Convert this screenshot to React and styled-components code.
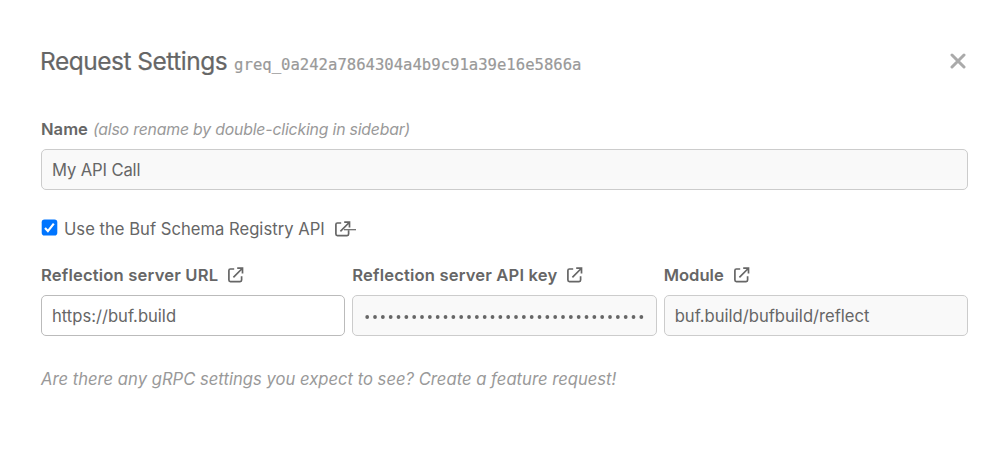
import React from "react";
import styled, { createGlobalStyle } from "styled-components";

const GlobalStyle = createGlobalStyle`
  *, *::before, *::after { box-sizing: border-box; }
  body {
    margin: 0;
    background: #fff;
    color: #666;
    font-family: Inter, "Liberation Sans", sans-serif;
    font-size: 16.6px;
  }
`;

const Dialog = styled.main`
  display: flex;
  flex-direction: column;
  height: 460px;
  padding: 41px 39px 0 41px;
`;

const Header = styled.header`
  display: flex;
  align-items: center;
  justify-content: space-between;
  height: 40px;
`;

const Heading = styled.div`
  display: flex;
  align-items: baseline;
  gap: 7px;
  margin-left: -1px;
  white-space: nowrap;
`;

const Title = styled.h1`
  margin: 0;
  font-size: 24.5px;
  font-weight: 400;
  line-height: 40px;
  letter-spacing: -0.5px;
  -webkit-text-stroke: 0.2px #666;
`;

const RequestId = styled.code`
  color: #999;
  font-family: "DejaVu Sans Mono", monospace;
  font-size: 15.6px;
  -webkit-text-stroke: 0.2px #999;
`;

const CloseButton = styled.button`
  display: flex;
  margin-right: 2px;
  padding: 0;
  border: 0;
  background: none;
`;

const Field = styled.div`
  display: flex;
  flex-direction: column;
  flex: ${(p) => p.$grow ? "1 1 0" : "none"};
  min-width: 0;
  margin-top: ${(p) => p.$top || 0}px;
`;

const Label = styled.label`
  display: flex;
  align-items: center;
  height: 34px;
  padding-bottom: 6px;
  font-size: 16.6px;
  font-weight: 600;
  letter-spacing: ${(p) => p.$tracking || 0}px;
  white-space: nowrap;
`;

const Hint = styled.span`
  margin-left: 5px;
  color: #999;
  font-size: 15.8px;
  font-style: italic;
  font-weight: 400;
  letter-spacing: -0.18px;
`;

const TextInput = styled.input`
  width: 100%;
  height: 41px;
  padding: 0 10px;
  border: 1px solid ${(p) => p.$active ? "#bbb" : "#ccc"};
  border-radius: 5px;
  outline: 0;
  background: ${(p) => p.$active ? "#fff" : "#f9f9f9"};
  color: #666;
  font-family: inherit;
  font-size: 16.6px;
  letter-spacing: ${(p) => p.$tracking || 0}px;
`;

const SecretInput = styled.div`
  display: flex;
  align-items: center;
  height: 41px;
  padding: 2px 10px 0 12px;
  border: 1px solid #ccc;
  border-radius: 5px;
  background: #f9f9f9;
`;

const Dots = styled.svg`
  display: block;
`;

const CheckRow = styled.label`
  display: flex;
  align-items: center;
  height: 30px;
  margin-top: 24px;
  font-size: 16.6px;
  letter-spacing: 0.02px;
  white-space: nowrap;
`;

const CheckIcon = styled.svg`
  flex: none;
  margin: 0 6px 4px 0;
`;

const ExternalLink = styled.span`
  display: flex;
  margin-left: 10px;
`;

const Columns = styled.section`
  display: flex;
  gap: 7px;
  margin-top: 17px;
`;

const Footer = styled.p`
  margin: 28px 0 0;
  color: #999;
  font-size: 16.6px;
  font-style: italic;
  line-height: 30px;
  letter-spacing: 0.02px;
`;

const LinkIcon = ({ struck }) => (
  <ExternalLink>
    <svg width="27" height="16" viewBox="0 0 27 16" fill="none" stroke="#666" strokeWidth="1.7">
      <path d="M6.2 2H2.4Q.9 2 .9 3.5v9.6q0 1.5 1.5 1.5h9.7q1.5 0 1.5-1.5V9.2" />
      <path d="M9.2 1.2h5.3v5.3M14.2 1.5 5.4 10.3" />
      {struck && <path d="M9 8.7h12" strokeWidth="1.2" />}
    </svg>
  </ExternalLink>
);

const MASK = Array.from({ length: 36 }, (_, i) => i);

export default function App() {
  return (
    <>
      <GlobalStyle />
      <Dialog>
        <Header>
          <Heading>
            <Title>Request Settings</Title>
            <RequestId>greq_0a242a7864304a4b9c91a39e16e5866a</RequestId>
          </Heading>
          <CloseButton aria-label="Close">
            <svg width="16" height="16" viewBox="0 0 16 16" fill="none" stroke="#aaa" strokeWidth="3" strokeLinecap="round">
              <path d="m2 2 12 12M14 2 2 14" />
            </svg>
          </CloseButton>
        </Header>

        <Field $top={34}>
          <Label htmlFor="name">
            Name <Hint>(also rename by double-clicking in sidebar)</Hint>
          </Label>
          <TextInput id="name" $tracking={-0.12} defaultValue="My API Call" />
        </Field>

        <CheckRow>
          <CheckIcon width="17" height="17" viewBox="0 0 17 17" role="img" aria-label="Checked">
            <rect x=".7" y=".5" width="15.6" height="16" rx="2.8" fill="#0075ff" />
            <path d="m4 9.1 2.9 3L12.8 4.6" fill="none" stroke="#fff" strokeWidth="2.2" />
          </CheckIcon>
          Use the Buf Schema Registry API
          <LinkIcon struck />
        </CheckRow>

        <Columns>
          <Field $grow>
            <Label htmlFor="url" $tracking={0.18}>Reflection server URL<LinkIcon /></Label>
            <TextInput id="url" $active defaultValue="https://buf.build" />
          </Field>
          <Field $grow>
            <Label $tracking={0.16}>Reflection server API key<LinkIcon /></Label>
            <SecretInput>
              <Dots width="282" height="6" viewBox="0 0 282 6" fill="#666">
                {MASK.map((i) => <circle key={i} cx={2.2 + i * 7.88} cy="3" r="1.9" />)}
              </Dots>
            </SecretInput>
          </Field>
          <Field $grow>
            <Label htmlFor="module">Module<LinkIcon /></Label>
            <TextInput id="module" defaultValue="buf.build/bufbuild/reflect" />
          </Field>
        </Columns>

        <Footer>Are there any gRPC settings you expect to see? Create a feature request!</Footer>
      </Dialog>
    </>
  );
}
